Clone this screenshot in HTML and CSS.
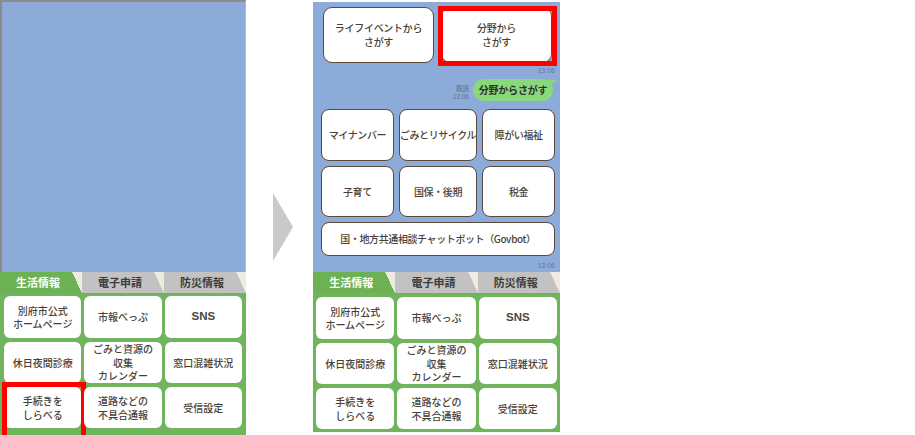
FILE: index.html
```html
<!DOCTYPE html>
<html lang="ja">
<head>
<meta charset="utf-8">
<title>別府市 LINE メニュー</title>
<link rel="stylesheet" href="styles.css">
</head>
<body>
<div class="stage">
  <section class="phone phone-left">
    <div class="chat chat-empty"></div>
    <div class="tabs">
      <div class="tab tab-on">生活情報</div>
      <div class="tab">電子申請</div>
      <div class="tab">防災情報</div>
    </div>
    <div class="menu">
      <div class="mbtn">別府市公式<br>ホームページ</div>
      <div class="mbtn">市報べっぷ</div>
      <div class="mbtn mbtn-latin">SNS</div>
      <div class="mbtn">休日夜間診療</div>
      <div class="mbtn">ごみと資源の<br>収集<br>カレンダー</div>
      <div class="mbtn">窓口混雑状況</div>
      <div class="mbtn">手続きを<br>しらべる<span class="frame frame-left"></span></div>
      <div class="mbtn">道路などの<br>不具合通報</div>
      <div class="mbtn">受信設定</div>
    </div>
  </section>

  <div class="arrow"></div>

  <section class="phone phone-right">
    <div class="chat chat-filled">
      <div class="qr-row">
        <div class="qr">ライフイベントから<br>さがす</div>
        <div class="qr">分野から<br>さがす<span class="frame frame-right"></span></div>
      </div>
      <div class="time">13:06</div>
      <div class="sent-row">
        <div class="read">既読<br>13:06</div>
        <div class="bubble">分野からさがす</div>
      </div>
      <div class="cat-grid">
        <div class="cat">マイナンバー</div>
        <div class="cat">ごみとリサイクル</div>
        <div class="cat">障がい福祉</div>
        <div class="cat">子育て</div>
        <div class="cat">国保・後期</div>
        <div class="cat">税金</div>
        <div class="cat cat-wide">国・地方共通相談チャットボット（Govbot）</div>
      </div>
      <div class="time time-last">13:06</div>
    </div>
    <div class="tabs">
      <div class="tab tab-on">生活情報</div>
      <div class="tab">電子申請</div>
      <div class="tab">防災情報</div>
    </div>
    <div class="menu menu-right">
      <div class="mbtn">別府市公式<br>ホームページ</div>
      <div class="mbtn">市報べっぷ</div>
      <div class="mbtn mbtn-latin">SNS</div>
      <div class="mbtn">休日夜間診療</div>
      <div class="mbtn">ごみと資源の<br>収集<br>カレンダー</div>
      <div class="mbtn">窓口混雑状況</div>
      <div class="mbtn">手続きを<br>しらべる</div>
      <div class="mbtn">道路などの<br>不具合通報</div>
      <div class="mbtn">受信設定</div>
    </div>
  </section>
</div>
</body>
</html>
```
FILE: styles.css
```css
* { box-sizing: border-box; }

html, body {
  margin: 0;
  padding: 0;
  background: #ffffff;
}

body {
  width: 915px;
  height: 435px;
  overflow: hidden;
  font-family: "Noto Sans CJK JP", "Noto Sans", sans-serif;
  color: #4a3f36;
}

.stage {
  display: flex;
  align-items: flex-start;
}

.phone {
  display: flex;
  flex-direction: column;
  width: 246px;
}

.phone-left {
  height: 435px;
}

.phone-right {
  margin-left: 20px;
  width: 247px;
}

.arrow {
  width: 0;
  height: 0;
  margin-left: 27px;
  margin-top: 193px;
  border-left: 20px solid #c9c9c9;
  border-top: 34px solid transparent;
  border-bottom: 34px solid transparent;
}

/* chat area */
.chat {
  background: #8dabd9;
}

.chat-empty {
  height: 272px;
  border-top: 2px solid #8b8b8b;
  border-left: 2px solid #8b8b8b;
  border-right: 1px solid #a9bbd6;
}

.chat-filled {
  height: 270px;
  margin-top: 2px;
  display: flex;
  flex-direction: column;
}

.qr-row {
  display: flex;
  gap: 7px;
  margin-top: 5px;
  padding-left: 10px;
}

.qr {
  position: relative;
  width: 111px;
  height: 56px;
  background: #ffffff;
  border: 1.5px solid #5b4a3b;
  border-radius: 9px;
  display: flex;
  align-items: center;
  justify-content: center;
  text-align: center;
  font-size: 10px;
  font-weight: 500;
  line-height: 14px;
  letter-spacing: -0.3px;
}

.time {
  align-self: flex-end;
  margin-top: 4px;
  margin-right: 5px;
  font-family: "Liberation Sans", sans-serif;
  font-size: 7px;
  line-height: 8px;
  color: #66789a;
}

.time-last {
  margin-top: 6px;
}

.sent-row {
  display: flex;
  justify-content: flex-end;
  align-items: flex-end;
  gap: 4px;
  margin-top: 4px;
  padding-right: 7px;
  height: 22px;
}

.read {
  font-family: "Liberation Sans", "Noto Sans CJK JP", sans-serif;
  font-size: 6.5px;
  line-height: 7.5px;
  color: #5d6f8c;
  text-align: right;
  padding-bottom: 1px;
}

.bubble {
  position: relative;
  width: 80px;
  height: 22px;
  background: #89d97c;
  border-radius: 11px;
  color: #2f2f2f;
  font-size: 10px;
  font-weight: bold;
  line-height: 22px;
  text-align: center;
  letter-spacing: -0.2px;
}

.bubble::after {
  content: "";
  position: absolute;
  right: -4px;
  top: 1px;
  border-left: 9px solid #89d97c;
  border-bottom: 7px solid transparent;
}

.cat-grid {
  display: grid;
  grid-template-columns: repeat(3, 1fr);
  grid-template-rows: 52px 51px 34px;
  gap: 5px;
  margin-top: 8px;
  padding-left: 8px;
  padding-right: 5px;
}

.cat {
  background: #ffffff;
  border: 1.5px solid #5b4a3b;
  border-radius: 8px;
  display: flex;
  align-items: center;
  justify-content: center;
  text-align: center;
  font-size: 10px;
  font-weight: 500;
  line-height: 14px;
  letter-spacing: -0.4px;
  white-space: nowrap;
}

.cat-wide {
  grid-column: 1 / 4;
}

/* tabs */
.tabs {
  display: flex;
  height: 21px;
}

.tab {
  flex: 1;
  background:
    linear-gradient(to bottom left, #efebdf 50%, transparent 50%) top right / 10px 21px no-repeat,
    #c2c2c2;
  color: #3d3d3d;
  font-size: 11px;
  font-weight: bold;
  line-height: 21px;
  text-align: center;
  padding-right: 6px;
}

.tab-on {
  background:
    linear-gradient(to bottom left, #efebdf 50%, transparent 50%) top right / 10px 21px no-repeat,
    #6cb153;
  color: #ffffff;
}

/* rich menu */
.menu {
  background: #70b45d;
  display: grid;
  grid-template-columns: repeat(3, 1fr);
  grid-template-rows: 42px 41px 41px;
  gap: 4px 3px;
  padding: 3px 4px;
  flex: 1;
}

.menu-right {
  flex: none;
  padding: 4px 3px 3px 3px;
}

.mbtn {
  position: relative;
  background: #ffffff;
  border-radius: 6px;
  display: flex;
  align-items: center;
  justify-content: center;
  text-align: center;
  font-size: 10px;
  font-weight: 500;
  line-height: 13.5px;
  color: #4a3f36;
}

.mbtn-latin {
  font-family: "Liberation Sans", sans-serif;
  font-size: 11.5px;
  font-weight: bold;
  color: #4f4640;
}

/* red highlight frames */
.frame {
  position: absolute;
  border: 5px solid #ff0000;
}

.frame-left {
  left: -2px;
  top: -5px;
  right: -5px;
  bottom: -12px;
}

.frame-right {
  left: -4px;
  top: -2px;
  right: -6px;
  bottom: -4px;
}
```
